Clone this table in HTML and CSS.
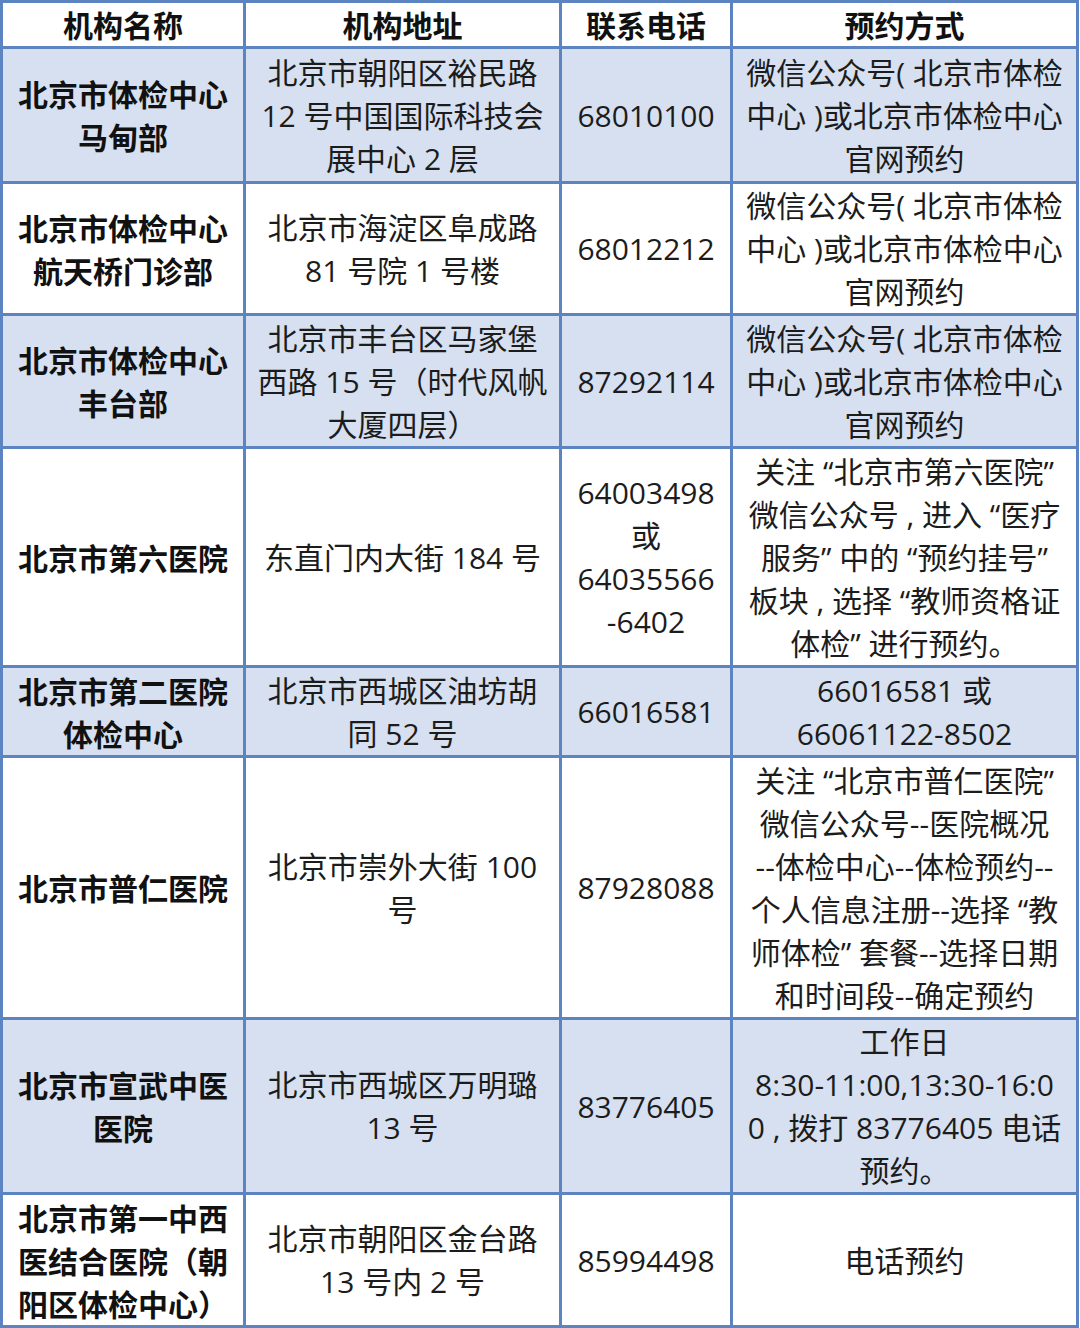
FILE: index.html
```html
<!DOCTYPE html>
<html lang="zh-CN">
<head>
<meta charset="utf-8">
<title>机构列表</title>
<link rel="stylesheet" href="styles.css">
</head>
<body>
<div class="table">
  <div class="row head">
    <div class="cell">机构名称</div>
    <div class="cell">机构地址</div>
    <div class="cell">联系电话</div>
    <div class="cell">预约方式</div>
  </div>
  <div class="row alt">
    <div class="cell name">北京市体检中心<br>马甸部</div>
    <div class="cell">北京市朝阳区裕民路<br>12 号中国国际科技会<br>展中心 2 层</div>
    <div class="cell">68010100</div>
    <div class="cell">微信公众号( 北京市体检<br>中心 )或北京市体检中心<br>官网预约</div>
  </div>
  <div class="row">
    <div class="cell name">北京市体检中心<br>航天桥门诊部</div>
    <div class="cell">北京市海淀区阜成路<br>81 号院 1 号楼</div>
    <div class="cell">68012212</div>
    <div class="cell">微信公众号( 北京市体检<br>中心 )或北京市体检中心<br>官网预约</div>
  </div>
  <div class="row alt">
    <div class="cell name">北京市体检中心<br>丰台部</div>
    <div class="cell">北京市丰台区马家堡<br>西路 15 号（时代风帆<br>大厦四层）</div>
    <div class="cell">87292114</div>
    <div class="cell">微信公众号( 北京市体检<br>中心 )或北京市体检中心<br>官网预约</div>
  </div>
  <div class="row">
    <div class="cell name">北京市第六医院</div>
    <div class="cell">东直门内大街 184 号</div>
    <div class="cell">64003498<br>或<br>64035566<br>-6402</div>
    <div class="cell">关注 “北京市第六医院”<br>微信公众号 , 进入 “医疗<br>服务” 中的 “预约挂号”<br>板块 , 选择 “教师资格证<br>体检” 进行预约。</div>
  </div>
  <div class="row alt">
    <div class="cell name">北京市第二医院<br>体检中心</div>
    <div class="cell">北京市西城区油坊胡<br>同 52 号</div>
    <div class="cell">66016581</div>
    <div class="cell">66016581 或<br>66061122-8502</div>
  </div>
  <div class="row">
    <div class="cell name">北京市普仁医院</div>
    <div class="cell">北京市崇外大街 100<br>号</div>
    <div class="cell">87928088</div>
    <div class="cell">关注 “北京市普仁医院”<br>微信公众号--医院概况<br>--体检中心--体检预约--<br>个人信息注册--选择 “教<br>师体检” 套餐--选择日期<br>和时间段--确定预约</div>
  </div>
  <div class="row alt">
    <div class="cell name">北京市宣武中医<br>医院</div>
    <div class="cell">北京市西城区万明璐<br>13 号</div>
    <div class="cell">83776405</div>
    <div class="cell">工作日<br>8:30-11:00,13:30-16:0<br>0 , 拨打 83776405 电话<br>预约。</div>
  </div>
  <div class="row">
    <div class="cell name">北京市第一中西<br>医结合医院（朝<br>阳区体检中心）</div>
    <div class="cell">北京市朝阳区金台路<br>13 号内 2 号</div>
    <div class="cell">85994498</div>
    <div class="cell">电话预约</div>
  </div>
</div>
</body>
</html>
```

FILE: styles.css
```css
html, body {
  margin: 0;
  padding: 0;
  background: #ffffff;
}

.table {
  display: grid;
  width: 1079px;
  box-sizing: border-box;
  grid-template-columns: 240px 313px 168px 343px;
  grid-template-rows: 43px 132px 129px 130px 216px 87px 259px 172px 130px;
  gap: 3px;
  padding: 3px;
  background: #5b84c1;
  font-family: "Open Sans", "Noto Sans CJK SC", sans-serif;
  font-size: 30px;
  line-height: 43px;
  color: #1c1c1c;
}

.row {
  display: contents;
}

.cell {
  display: flex;
  align-items: center;
  justify-content: center;
  text-align: center;
  background: #ffffff;
  white-space: nowrap;
  overflow: hidden;
}

.row.alt .cell {
  background: #d6e0f0;
}

.head .cell,
.cell.name {
  font-family: "Noto Sans CJK SC", sans-serif;
  font-weight: 700;
  color: #111111;
}
```
